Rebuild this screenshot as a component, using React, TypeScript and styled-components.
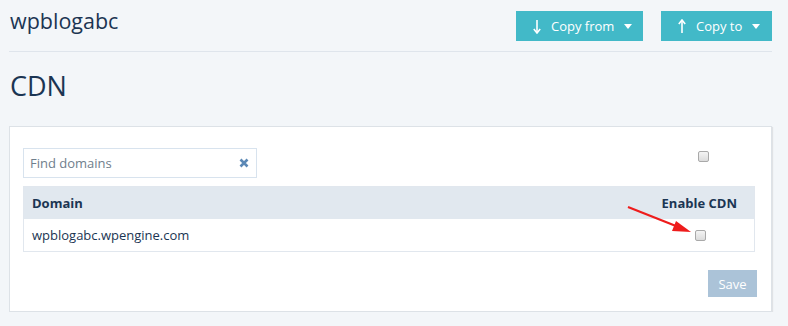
import React from "react";
import styled, { createGlobalStyle } from "styled-components";

const Global = createGlobalStyle`
  html, body { margin: 0; padding: 0; background: #f3f6f9; }
  body { font-family: "Open Sans", "Liberation Sans", sans-serif; color: #1f3a55; }
`;

const Page = styled.div`
  padding: 0 16px 0 9px;
`;

const Header = styled.div`
  display: flex;
  align-items: flex-start;
  justify-content: space-between;
  height: 52px;
  border-bottom: 1px solid #dfe5ec;
  box-sizing: border-box;
`;

const Title = styled.h1`
  margin: 6px 0 0 1px;
  font-size: 21.5px;
  font-weight: 400;
  line-height: 30px;
  color: #1b3553;
`;

const Actions = styled.div`
  display: flex;
  gap: 18px;
  padding-top: 11px;
`;

const ActionButton = styled.button<{ $w: number }>`
  display: flex;
  align-items: center;
  gap: 10px;
  width: ${(p) => p.$w}px;
  height: 30px;
  padding: 0 0 0 17px;
  border: none;
  background: #42b9c8;
  color: #fff;
  font-family: inherit;
  font-size: 13px;
  cursor: pointer;
`;

const Caret = styled.span`
  width: 0;
  height: 0;
  border-left: 4px solid transparent;
  border-right: 4px solid transparent;
  border-top: 5px solid #fff;
  margin-left: 0;
`;

const SectionTitle = styled.h2`
  margin: 14px 0 0 1px;
  font-size: 27px;
  font-weight: 400;
  line-height: 40px;
  color: #1b3553;
`;

const Panel = styled.div`
  margin-top: 20px;
  background: #fff;
  border: 1px solid #dde2e7;
  box-shadow: 1px 1px 1px rgba(0, 0, 0, 0.08);
  padding: 21px 16px 13px 13px;
  height: 186px;
  box-sizing: border-box;
`;

const TopRow = styled.div`
  display: flex;
  align-items: flex-start;
  justify-content: space-between;
  height: 38px;
`;

const Search = styled.div`
  display: flex;
  align-items: center;
  width: 234px;
  height: 30px;
  border: 1px solid #d8e3ee;
  box-sizing: border-box;
  padding: 0 7px 0 6px;
`;

const SearchInput = styled.input`
  flex: 1;
  border: none;
  outline: none;
  font-family: inherit;
  font-size: 13px;
  color: #1f3a55;
  padding: 0;
  &::placeholder { color: #6f7e8c; }
`;

const Box = styled.span<{ $mr: number }>`
  display: inline-block;
  width: 11px;
  height: 11px;
  border: 1px solid #a9a9a9;
  border-radius: 2px;
  background: linear-gradient(#f4f4f4, #dcdcdc);
  box-sizing: border-box;
  margin-right: ${(p) => p.$mr}px;
`;

const TopBox = styled.div`
  padding-top: 3px;
  line-height: 0;
`;

const Table = styled.div`
  border: 1px solid #e1e7ee;
  position: relative;
`;

const HeadRow = styled.div`
  display: flex;
  align-items: center;
  justify-content: space-between;
  height: 32px;
  background: #e1e8ef;
  padding: 0 17px 0 8px;
  font-size: 13px;
  font-weight: 700;
  color: #1b3553;
`;

const BodyRow = styled.div`
  display: flex;
  align-items: center;
  justify-content: space-between;
  height: 32px;
  padding: 0 0 0 8px;
  font-size: 13px;
  color: #1b3553;
`;

const Arrow = styled.svg`
  position: absolute;
  left: 603px;
  top: 18px;
`;

const Footer = styled.div`
  display: flex;
  justify-content: flex-end;
  margin-top: 18px;
  margin-right: -2px;
`;

const SaveButton = styled.button`
  width: 49px;
  height: 27px;
  border: none;
  background: #abc3d8;
  color: #fff;
  font-family: inherit;
  font-size: 13px;
  padding: 0;
`;

export default function App() {
  return (
    <>
      <Global />
      <Page>
        <Header>
          <Title>wpblogabc</Title>
          <Actions>
            <ActionButton $w={127}>
              <svg width="8" height="15" viewBox="0 0 8 15">
                <path d="M4 1 V13" stroke="#fff" strokeWidth="1.6" />
                <path d="M0.8 10 L4 14 L7.2 10" stroke="#fff" strokeWidth="1.6" fill="none" />
              </svg>
              Copy from
              <Caret />
            </ActionButton>
            <ActionButton $w={111}>
              <svg width="8" height="15" viewBox="0 0 8 15">
                <path d="M4 2 V14" stroke="#fff" strokeWidth="1.6" />
                <path d="M0.8 5 L4 1 L7.2 5" stroke="#fff" strokeWidth="1.6" fill="none" />
              </svg>
              Copy to
              <Caret />
            </ActionButton>
          </Actions>
        </Header>
        <SectionTitle>CDN</SectionTitle>
        <Panel>
          <TopRow>
            <Search>
              <SearchInput placeholder="Find domains" />
              <svg width="10" height="10" viewBox="0 0 10 10">
                <path d="M1.5 1.5 L8.5 8.5 M8.5 1.5 L1.5 8.5" stroke="#5b88b5" strokeWidth="2.6" />
              </svg>
            </Search>
            <TopBox>
              <Box $mr={46} />
            </TopBox>
          </TopRow>
          <Table>
            <HeadRow>
              <span>Domain</span>
              <span>Enable CDN</span>
            </HeadRow>
            <BodyRow>
              <span>wpblogabc.wpengine.com</span>
              <Box $mr={48} />
            </BodyRow>
            <Arrow width="70" height="34" viewBox="0 0 70 34">
              <path d="M1 2 L54 23" stroke="#ee1c1c" strokeWidth="2.2" />
              <path d="M49 16 L64 27 L45 26 Z" fill="#ee1c1c" />
            </Arrow>
          </Table>
          <Footer>
            <SaveButton>Save</SaveButton>
          </Footer>
        </Panel>
      </Page>
    </>
  );
}
